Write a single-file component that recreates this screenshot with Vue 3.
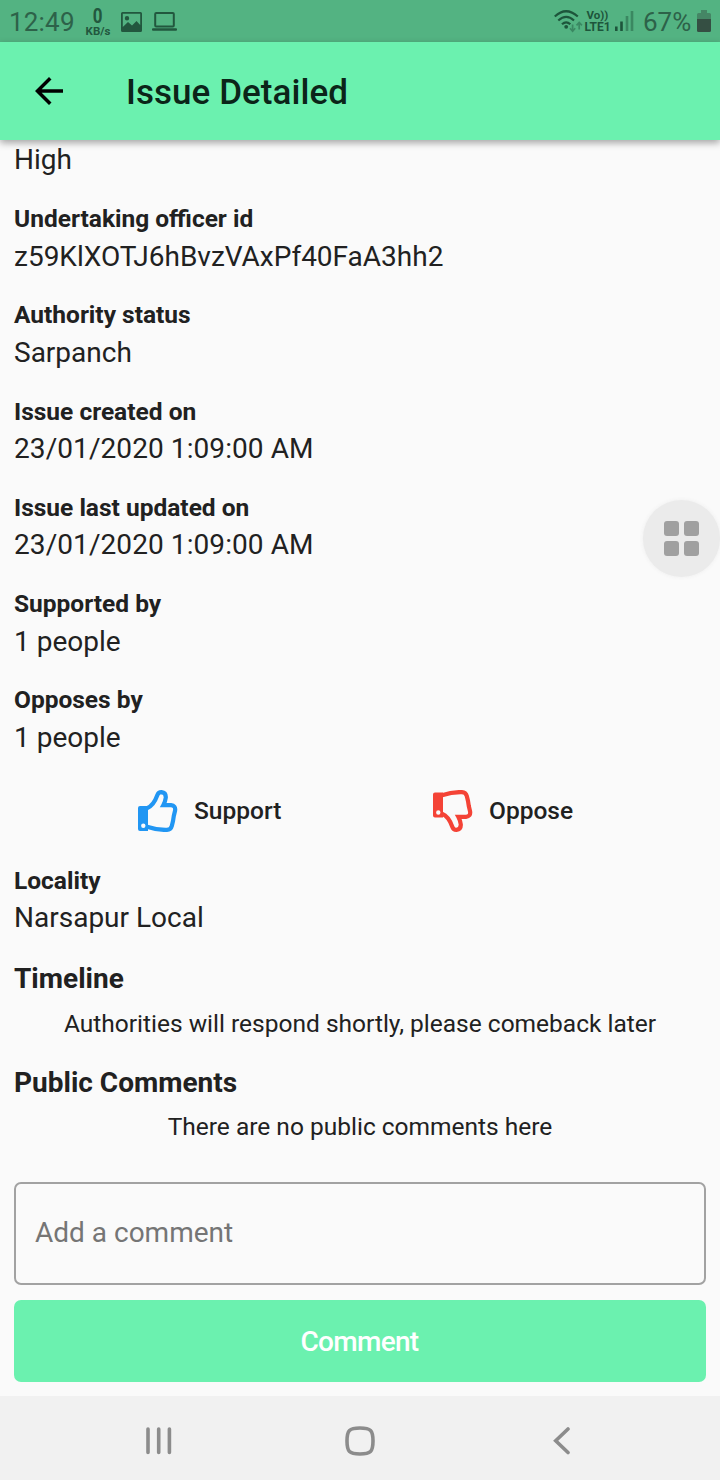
<script setup>
const fields = [
  { label: 'Undertaking officer id', value: 'z59KlXOTJ6hBvzVAxPf40FaA3hh2' },
  { label: 'Authority status', value: 'Sarpanch' },
  { label: 'Issue created on', value: '23/01/2020 1:09:00 AM', kind: 'date' },
  { label: 'Issue last updated on', value: '23/01/2020 1:09:00 AM', kind: 'date' },
  { label: 'Supported by', value: '1 people' },
  { label: 'Opposes by', value: '1 people' },
]
</script>

<template>
  <div class="screen">
    <header class="status">
      <span class="time">12:49</span>
      <span class="speed"><b>0</b><small>KB/s</small></span>
      <svg class="pic" width="21" height="20" viewBox="0 0 21 20">
        <path fill-rule="evenodd" d="M1.5 0h18Q21 0 21 1.500v17Q21 20 19.500 20h-18Q0 20 0 18.500v-17Q0 0 1.500 0zM1.800 1.800v13.200L7 10l4 3.500L15.500 9l3.700 4V1.800zM6 4a2.200 2.200 0 1 1 0 4.400A2.200 2.200 0 0 1 6 4z" />
      </svg>
      <svg class="laptop" width="25" height="19" viewBox="0 0 25 19">
        <rect x="3.200" y="1" width="18.600" height="13.500" rx="1" fill="none" stroke="currentColor" stroke-width="2" />
        <rect x="0" y="16.300" width="25" height="2.500" rx="1" />
      </svg>
      <svg class="wifi" width="29" height="24" viewBox="0 0 29 24">
        <g fill="none" stroke="currentColor" stroke-width="2.200">
          <path d="M.8 7.500Q12 -3 23.800 7.500M4.300 11.500Q12.200 4.300 20 11.500M8 15.300Q12.200 11.400 16.300 15.300" />
        </g>
        <circle cx="12.200" cy="17.800" r="1.900" />
        <g class="faint" fill="none" stroke="currentColor" stroke-width="1.700">
          <path d="M18.600 15.500v6.500M16 19.300l2.600 2.900 2.600-2.900M25.200 20.500V13.500M22.500 16.300l2.700-2.900 2.700 2.900" />
        </g>
      </svg>
      <span class="volte"><span>Vo))</span><span class="lte">LTE1</span></span>
      <svg class="signal" width="19" height="20" viewBox="0 0 19 20">
        <rect x="0" y="15.500" width="2.600" height="4.500" /><rect x="5.200" y="10.500" width="2.600" height="9.500" />
        <g class="faint"><rect x="10.700" y="5" width="2.600" height="15" /><rect x="15.700" y="0" width="2.600" height="20" /></g>
      </svg>
      <span class="percent">67%</span>
      <svg class="battery" width="14" height="22" viewBox="0 0 14 22">
        <path class="faint" d="M4 0h6v3h2.500Q14 3 14 4.500V9H0V4.500Q0 3 1.500 3H4z" />
        <path d="M0 9h14v11.500Q14 22 12.500 22h-11Q0 22 0 20.500z" />
      </svg>
    </header>

    <div class="appbar">
      <svg width="28" height="28" viewBox="0 0 28 28">
        <path d="M28 12.300v3.400H6.700l9.800 9.800L14 28 0 14 14 0l2.500 2.500-9.800 9.800z" />
      </svg>
      <h1>Issue Detailed</h1>
    </div>

    <main>
      <p class="value first">High</p>
      <section v-for="f in fields" :key="f.label" class="field">
        <h3>{{ f.label }}</h3>
        <p class="value" :class="f.kind">{{ f.value }}</p>
      </section>

      <div class="votes">
        <button class="vote support">
          <svg width="40" height="42" viewBox="0 0 40 42">
            <path fill-rule="evenodd" d="M2 16H10V41H2Q0 41 0 39V18Q0 16 2 16zM5.300 33.500a2.200 2.200 0 1 0 0 4.400 2.200 2.200 0 0 0 0-4.400z" />
            <path d="M9 18.200C15 16 18 9 19.500 4.800Q20.500 2.100 23.500 2.200Q28 2.700 27.800 7.500Q27.300 11.500 25.300 15.200H33Q37.800 15.700 37.100 20.500L35.800 26L35 31L33.800 36Q32.800 39.800 29 39.900Q19 40.200 9 36.800" />
          </svg>
          <span>Support</span>
        </button>
        <button class="vote oppose">
          <svg width="40" height="42" viewBox="0 0 40 42">
            <g transform="translate(0 42) scale(1 -1)">
              <path fill-rule="evenodd" d="M2 14.500H10V39.500H2Q0 39.500 0 37.500V16.500Q0 14.500 2 14.500zM5.300 17.300a2.200 2.200 0 1 0 0 4.400 2.200 2.200 0 0 0 0-4.400z" />
              <path d="M9 18.200C15 16 18 9 19.500 4.800Q20.500 2.100 23.500 2.200Q28 2.700 27.800 7.500Q27.300 11.500 25.300 15.200H33Q37.800 15.700 37.100 20.500L35.800 26L35 31L33.800 36Q32.800 39.800 29 39.900Q19 40.200 9 36.800" />
            </g>
          </svg>
          <span>Oppose</span>
        </button>
      </div>

      <section class="locality">
        <h3>Locality</h3>
        <p class="value">Narsapur Local</p>
      </section>
      <h2 class="timeline">Timeline</h2>
      <p class="note respond">Authorities will respond shortly, please comeback later</p>
      <h2 class="public">Public Comments</h2>
      <p class="note none">There are no public comments here</p>
      <div class="entry">Add a comment</div>
      <button class="submit">Comment</button>
    </main>

    <nav>
      <svg width="26" height="28" viewBox="0 0 26 28"><path d="M2 2v23.500M12.700 2v23.500M23.400 2v23.500" /></svg>
      <svg class="home" width="30" height="30" viewBox="0 0 30 30"><path d="M15 2Q23 2 25.500 4.500T28 15T25.500 25.500T15 28T4.500 25.500T2 15T4.500 4.500T15 2z" /></svg>
      <svg width="18" height="28" viewBox="0 0 18 28"><path d="M15 2L2.700 13.800 15 25.500" /></svg>
    </nav>

    <div class="bubble"><i></i><i></i><i></i><i></i></div>
  </div>
</template>

<style>
body { background: #fafafa; }
</style>

<style scoped>
* { box-sizing: border-box; }
.screen {
  position: relative;
  display: flex;
  flex-direction: column;
  width: 720px;
  height: 1480px;
  overflow: hidden;
  background: #fafafa;
  color: #212121;
  font-family: Roboto, sans-serif;
}
h1, h2, h3, p { margin: 0; white-space: nowrap; }
svg { display: block; flex: none; fill: currentColor; }
button { border: 0; padding: 0; background: none; font-family: inherit; }
.status {
  display: flex;
  align-items: center;
  height: 42px;
  flex: none;
  padding: 0 9px;
  background: #53b382;
  color: #22573e;
}
.time { width: 76px; font-size: 26px; letter-spacing: .2px; padding-top: 1px; color: #2d6249; }
.speed { display: flex; flex-direction: column; align-items: center; width: 26px; }
.speed b { font-size: 20px; line-height: 19px; font-weight: 700; transform: scaleX(.85); }
.speed small { font-size: 11.500px; line-height: 10px; font-weight: 700; }
.pic { margin-left: 10px; margin-top: 1px; }
.laptop { margin-left: 10px; margin-top: 1px; }
.wifi { margin-left: auto; color: #1d553b; }
.faint { opacity: .45; }
.volte { display: flex; flex-direction: column; align-items: center; width: 27px; margin-left: 1px; font-size: 11.500px; line-height: 12px; font-weight: 700; color: #1d553b; }
.lte { font-size: 12px; }
.signal { margin-left: 4px; color: #1d553b; }
.percent { margin-left: 9px; width: 50px; font-size: 26px; padding-top: 1px; color: #2d6249; }
.battery { margin-left: 4px; margin-bottom: 1px; color: #354f43; }
.appbar {
  position: relative;
  z-index: 1;
  display: flex;
  align-items: center;
  height: 98px;
  flex: none;
  padding-left: 35px;
  background: #6bf1af;
  color: #000;
  box-shadow: 0 3px 7px rgba(0, 0, 0, .34);
}
h1 { margin-left: 63px; font-size: 35px; font-weight: 500; letter-spacing: .05px; color: #0b2519; padding-top: 2px; }
main { flex: 1; padding: 0 14px; }
.value { font-size: 28px; line-height: 33px; }
.value.first { margin-top: 3px; }
.value.date { letter-spacing: .08px; }
h3 { font-size: 24.500px; line-height: 29px; font-weight: 700; }
.field { height: 68.250px; margin-top: 28px; }
.field .value { margin-top: 7px; }
.field .date { margin-top: 6px; }
.votes { display: flex; height: 42px; margin-top: 36px; padding-left: 124px; }
.vote { display: flex; flex: none; align-items: center; height: 42px; width: 295px; font-size: 24.500px; font-weight: 500; }
.vote span { margin-left: 16px; color: #212121; }
.vote path + path { fill: none; stroke: currentColor; stroke-width: 4.200; stroke-linejoin: miter; }
.support { color: #2196f3; }
.oppose { color: #f44336; }
.locality { margin-top: 34px; }
.locality .value { margin-top: 6px; }
h2 { font-size: 28px; line-height: 33px; font-weight: 700; }
.timeline { margin-top: 28px; }
.note { text-align: center; font-size: 24.500px; line-height: 29px; }
.respond { margin-top: 14px; }
.public { margin-top: 28px; }
.none { margin-top: 13px; }
.entry {
  height: 103px;
  margin-top: 41.500px;
  padding-left: 19px;
  border: 2px solid #a2a2a2;
  border-radius: 7px;
  font-size: 28px;
  line-height: 98px;
  color: #757575;
}
.submit { display: block; width: 100%; height: 82px; margin-top: 14.500px; padding: 1px 1px 0 0; border-radius: 7px; background: #6bf1af; color: #fff; font-size: 28px; font-weight: 500; letter-spacing: -.700px; }
nav {
  display: flex;
  align-items: center;
  height: 84px;
  flex: none;
  padding: 5px 149px 0 146px;
  justify-content: space-between;
  background: #f1f1f1;
  color: #8c8c8c;
}
nav path { fill: none; stroke: currentColor; stroke-width: 3.600; stroke-linecap: round; }
.home { margin-right: 6px; }
.bubble {
  position: absolute;
  left: 643px;
  top: 500px;
  width: 77px;
  height: 77px;
  border-radius: 50%;
  display: grid;
  grid-template-columns: 15px 15px;
  grid-template-rows: 15px 15px;
  gap: 5px;
  place-content: center;
  background: #ebebeb;
  box-shadow: 0 0 4px #ededed;
}
.bubble i { border-radius: 3px; background: #a0a0a0; }
</style>
